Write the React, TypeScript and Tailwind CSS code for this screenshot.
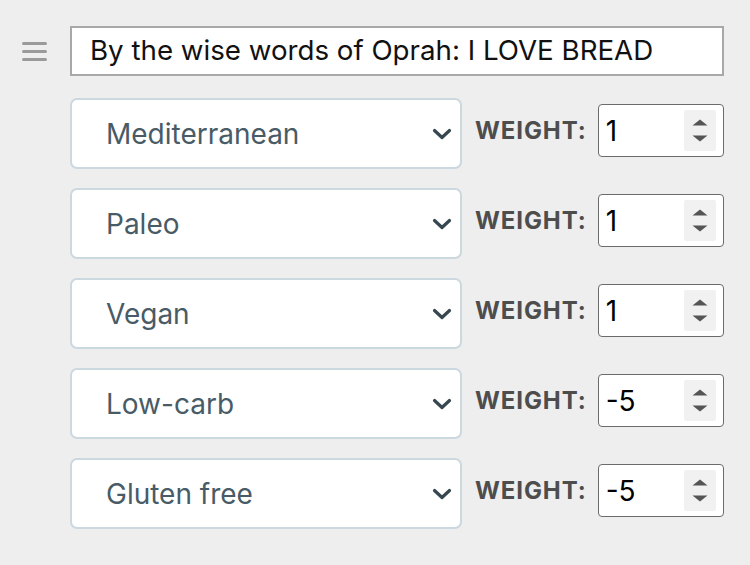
const diets = [
  { name: "Mediterranean", weight: "1" },
  { name: "Paleo", weight: "1" },
  { name: "Vegan", weight: "1" },
  { name: "Low-carb", weight: "-5" },
  { name: "Gluten free", weight: "-5" },
];

const Chevron = () => (
  <svg width="20" height="12" viewBox="0 0 20 12" className="shrink-0">
    <path d="M2.5 2.5 L10 9.5 L17.5 2.5" fill="none" stroke="#37474f" strokeWidth="3.2" strokeLinecap="round" strokeLinejoin="round" />
  </svg>
);

const Spinner = () => (
  <div className="flex h-[41px] w-[32px] flex-col items-center justify-center gap-[9px] rounded-[2px] bg-[#f1f1f1]">
    <svg width="16" height="7" viewBox="0 0 16 7">
      <path d="M8 0.5 L15.5 6.5 L0.5 6.5 Z" fill="#555" />
    </svg>
    <svg width="16" height="7" viewBox="0 0 16 7">
      <path d="M0.5 0.5 L15.5 0.5 L8 6.5 Z" fill="#555" />
    </svg>
  </div>
);

function DietRow({ name, weight }: { name: string; weight: string }) {
  return (
    <div className="flex items-center">
      <div className="flex h-[71px] w-[392px] items-center justify-between rounded-[7px] border-2 border-[#cbd8e0] bg-white pl-[34px] pr-[8px]">
        <span className="text-[28px] text-[#485b66]">{name}</span>
        <Chevron />
      </div>
      <div className="mb-[6px] flex items-center">
        <span className="ml-[13px] text-[24px] font-bold tracking-[0.9px] text-[#4d4d4d]">WEIGHT:</span>
        <div className="ml-[11px] flex h-[53px] w-[126px] items-center justify-between rounded-[4px] border-[1.5px] border-[#6b6b6b] bg-white pl-[7px] pr-[7px]">
          <span className="text-[28px] text-black">{weight}</span>
          <Spinner />
        </div>
      </div>
    </div>
  );
}

export default function App() {
  return (
    <div className="h-[565px] w-[750px] bg-[#eeeeee] pt-[26px]" style={{ fontFamily: "Inter, 'Liberation Sans', sans-serif" }}>
      <div className="flex items-center">
        <div className="flex w-[70px] justify-center pr-[2px]">
          <div className="flex w-[25px] flex-col gap-[5px]">
            <div className="h-[3px] rounded-full bg-[#9a9a9a]" />
            <div className="h-[3px] rounded-full bg-[#9a9a9a]" />
            <div className="h-[3px] rounded-full bg-[#9a9a9a]" />
          </div>
        </div>
        <div className="flex h-[50px] w-[654px] items-center border-2 border-[#a8a8a8] bg-white pl-[18px]">
          <span className="text-[27.7px] text-[#111]">By the wise words of Oprah: I LOVE BREAD</span>
        </div>
      </div>
      <div className="ml-[70px] mt-[22px] flex flex-col gap-[19px]">
        {diets.map((d) => (
          <DietRow key={d.name} name={d.name} weight={d.weight} />
        ))}
      </div>
    </div>
  );
}
